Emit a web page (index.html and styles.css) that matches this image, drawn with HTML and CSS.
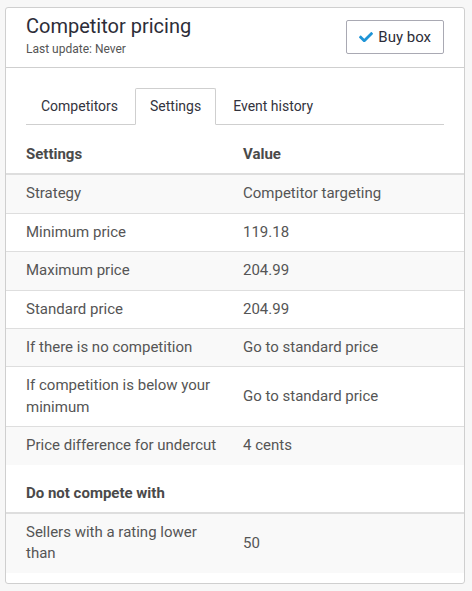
FILE: index.html
```html
<!DOCTYPE html>
<html lang="en">
<head>
<meta charset="utf-8">
<title>Competitor pricing</title>
<link rel="stylesheet" href="styles.css">
</head>
<body>
<div class="card">
  <div class="card-header">
    <div class="heading">
      <h1 class="title">Competitor pricing</h1>
      <div class="subtitle">Last update: Never</div>
    </div>
    <button class="btn" type="button">
      <svg class="check" viewBox="0 65 512 382" aria-hidden="true"><path d="M173.898 439.404l-166.4-166.4c-9.997-9.997-9.997-26.206 0-36.204l36.203-36.204c9.997-9.998 26.207-9.998 36.204 0L192 312.69 432.095 72.596c9.997-9.997 26.207-9.997 36.204 0l36.203 36.204c9.997 9.997 9.997 26.206 0 36.204l-294.4 294.401c-9.998 9.997-26.207 9.997-36.204-.001z"/></svg>
      <span>Buy box</span>
    </button>
  </div>
  <ul class="tabs">
    <li class="tab">Competitors</li>
    <li class="tab active">Settings</li>
    <li class="tab">Event history</li>
  </ul>
  <div class="tab-content">
    <table class="table">
      <thead>
        <tr><th>Settings</th><th>Value</th></tr>
      </thead>
      <tbody>
        <tr><td>Strategy</td><td>Competitor targeting</td></tr>
        <tr><td>Minimum price</td><td>119.18</td></tr>
        <tr><td>Maximum price</td><td>204.99</td></tr>
        <tr><td>Standard price</td><td>204.99</td></tr>
        <tr><td>If there is no competition</td><td>Go to standard price</td></tr>
        <tr><td>If competition is below your minimum</td><td>Go to standard price</td></tr>
        <tr><td>Price difference for undercut</td><td>4 cents</td></tr>
      </tbody>
    </table>
    <table class="table table-second">
      <thead>
        <tr><th colspan="2">Do not compete with</th></tr>
      </thead>
      <tbody>
        <tr><td>Sellers with a rating lower than</td><td>50</td></tr>
      </tbody>
    </table>
  </div>
</div>
</body>
</html>
```

FILE: styles.css
```css
html, body {
  margin: 0;
}
body {
  background: #f7f7f7;
  padding: 7px 7px 7px 5px;
  font-family: Roboto, "Noto Sans", "Liberation Sans", sans-serif;
  font-size: 14px;
  color: #555;
}
.card {
  background: #fff;
  border: 1px solid #cfcfcf;
  border-radius: 3px;
  padding-bottom: 10px;
}
.card-header {
  display: flex;
  justify-content: space-between;
  align-items: flex-start;
  padding: 6px 20px 10px 20px;
  border-bottom: 1px solid #cfcfcf;
}
.title {
  margin: 0;
  font-size: 20px;
  line-height: 24px;
  font-weight: 400;
  color: #2d2d38;
}
.subtitle {
  margin-top: 3px;
  font-size: 12px;
  line-height: 16px;
  color: #555;
}
.btn {
  margin-top: 6px;
  display: flex;
  align-items: center;
  gap: 5px;
  padding: 6px 12px;
  background: #fff;
  border: 1px solid #a9a9b3;
  border-radius: 2px;
  font-family: inherit;
  font-size: 15px;
  line-height: 20px;
  color: #2d2d38;
}
.check {
  width: 14px;
  height: 10.5px;
  fill: #1f94d6;
}
.tabs {
  list-style: none;
  margin: 20px 20px 0 20px;
  padding: 0;
  display: flex;
  border-bottom: 1px solid #cfcfcf;
}
.tab {
  margin-right: 2px;
  margin-bottom: -1px;
  padding: 7px 14px 8px 14px;
  line-height: 20px;
  border: 1px solid transparent;
  border-radius: 2px 2px 0 0;
  color: #33333d;
}
.tab.active {
  border-color: #cfcfcf;
  border-bottom-color: #fff;
  background: #fff;
}
.tab-content {
  margin-top: 11px;
}
.table {
  width: 100%;
  border-collapse: collapse;
  border-spacing: 0;
  font-size: 15px;
}
.table th,
.table td {
  padding: 8px;
  line-height: 21.4px;
  text-align: left;
  vertical-align: middle;
  width: 50%;
}
.table th:first-child,
.table td:first-child {
  padding-left: 20px;
}
.table th:last-child,
.table td:last-child {
  padding-right: 20px;
}
.table th {
  font-weight: 700;
  color: #4a4a4a;
  border-bottom: 2px solid #dedede;
}
.table td {
  border-top: 1px solid #dedede;
}
.table tbody tr:first-child td {
  border-top: 0;
}
.table tbody tr:nth-child(odd) {
  background: #f9f9f9;
}
.table-second {
  margin-top: 10px;
}
```
